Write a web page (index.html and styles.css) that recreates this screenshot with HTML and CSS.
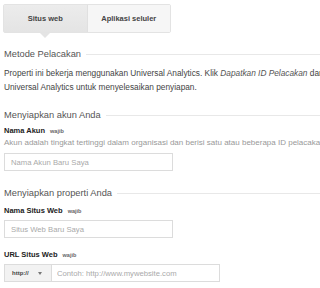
FILE: index.html
```html
<!DOCTYPE html>
<html lang="id">
<head>
    <meta charset="UTF-8">
    <title>Properti Baru</title>
    <link rel="stylesheet" href="styles.css">
</head>
<body>
    <div class="tabs">
        <div class="tab active">Situs web</div>
        <div class="tab">Aplikasi seluler</div>
    </div>

    <div class="section-title"><span>Metode Pelacakan</span></div>
    <p class="intro">Properti ini bekerja menggunakan Universal Analytics. Klik <em>Dapatkan ID Pelacakan</em> dan terapkan kode<br>Universal Analytics untuk menyelesaikan penyiapan.</p>

    <div class="section-title"><span>Menyiapkan akun Anda</span></div>
    <div class="field">
        <label class="field-label">Nama Akun <span class="req">wajib</span></label>
        <div class="hint">Akun adalah tingkat tertinggi dalam organisasi dan berisi satu atau beberapa ID pelacakan.</div>
        <input type="text" class="text-input" placeholder="Nama Akun Baru Saya">
    </div>

    <div class="section-title prop"><span>Menyiapkan properti Anda</span></div>
    <div class="field">
        <label class="field-label tight">Nama Situs Web <span class="req">wajib</span></label>
        <input type="text" class="text-input" placeholder="Situs Web Baru Saya">
    </div>

    <div class="field url">
        <label class="field-label tight">URL Situs Web <span class="req">wajib</span></label>
        <div class="url-group">
            <div class="protocol">http:// <span class="caret"></span></div>
            <input type="text" class="url-input" placeholder="Contoh: http://www.mywebsite.com">
        </div>
    </div>
</body>
</html>
```

FILE: styles.css
```css
* {
    margin: 0;
    padding: 0;
    box-sizing: border-box;
}

body {
    font-family: 'Liberation Sans', Arial, sans-serif;
    background: white;
    width: 320px;
    overflow: hidden;
    padding: 0 0 0 4px;
    color: #444;
}

.tabs {
    display: flex;
    width: 168px;
    height: 29px;
    margin: 4px 0 0 -1px;
    border: 1px solid #e3e3e3;
    border-radius: 2px;
}

.tab {
    position: relative;
    flex: 1;
    display: flex;
    align-items: center;
    justify-content: center;
    font-size: 7.5px;
    font-weight: bold;
    color: #444;
    background: #f6f6f6;
}

.tab.active {
    background: linear-gradient(#ececec, #e4e4e4);
    border-right: 1px solid #e0e0e0;
}

.tab.active::after {
    content: "";
    position: absolute;
    left: 50%;
    bottom: -6px;
    margin-left: -5px;
    border-left: 5px solid transparent;
    border-right: 5px solid transparent;
    border-top: 5px solid #e4e4e4;
}

.section-title {
    display: flex;
    align-items: center;
    font-size: 9.3px;
    line-height: 12px;
    color: #555;
    margin-top: 15px;
    white-space: nowrap;
}

.section-title::after {
    content: "";
    flex: 1;
    height: 1px;
    background: #e8e8e8;
    margin-left: 5px;
}

.section-title.prop {
    margin-top: 16px;
}

.intro {
    font-size: 8.3px;
    line-height: 14px;
    color: #444;
    margin-top: 6px;
    white-space: nowrap;
}

.intro em {
    color: #555;
}

.field {
    margin-top: 4px;
}

.section-title.prop + .field {
    margin-top: 6px;
}

.field.url {
    margin-top: 11px;
}

.field-label {
    display: block;
    font-size: 7.5px;
    line-height: 11px;
    font-weight: bold;
    color: #222;
}

.field-label.tight {
    margin-bottom: 3px;
}

.req {
    font-size: 5.5px;
    color: #666;
    margin-left: 3px;
}

.hint {
    font-size: 8px;
    line-height: 11px;
    color: #999;
    white-space: nowrap;
    margin-bottom: 5px;
}

.text-input,
.url-input {
    display: block;
    width: 169px;
    height: 18px;
    border: 1px solid #dcdcdc;
    padding: 0 6px;
    font-family: inherit;
    font-size: 7.7px;
    color: #444;
    outline: none;
}

.text-input::placeholder,
.url-input::placeholder {
    color: #aaa;
}

.url-group {
    display: flex;
    height: 18px;
}

.protocol {
    width: 47px;
    display: flex;
    align-items: center;
    padding-left: 7px;
    gap: 9px;
    font-size: 6px;
    font-weight: bold;
    color: #444;
    background: #f2f2f2;
    border: 1px solid #dcdcdc;
    border-right: none;
}

.caret {
    border-left: 2.5px solid transparent;
    border-right: 2.5px solid transparent;
    border-top: 3px solid #777;
}

.url-input {
    padding: 0 5px;
}
```
